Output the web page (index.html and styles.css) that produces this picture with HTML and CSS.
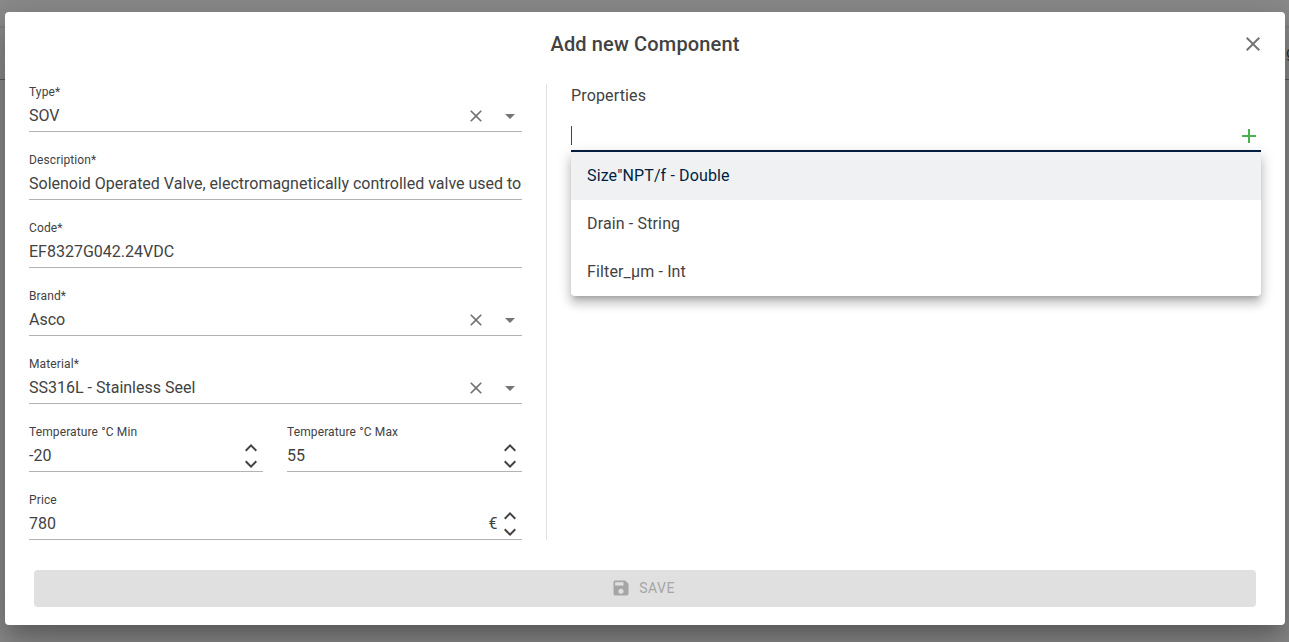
FILE: index.html
```html
<!DOCTYPE html>
<html lang="en">
<head>
<meta charset="utf-8">
<title>Add new Component</title>
<link rel="stylesheet" href="styles.css">
</head>
<body>
<svg class="sprite" aria-hidden="true">
  <symbol id="close" viewBox="0 0 24 24"><path d="M19 6.41L17.59 5L12 10.59L6.41 5L5 6.41L10.59 12L5 17.59L6.41 19L12 13.41L17.59 19L19 17.59L13.41 12z"/></symbol>
  <symbol id="drop" viewBox="0 0 24 24"><path d="M7 10l5 5 5-5z"/></symbol>
  <symbol id="plus" viewBox="0 0 24 24"><path d="M19 13h-6v6h-2v-6H5v-2h6V5h2v6h6z"/></symbol>
  <symbol id="up" viewBox="0 0 24 24"><path d="M7.41 15.41L12 10.83l4.59 4.58L18 14l-6-6-6 6z"/></symbol>
  <symbol id="down" viewBox="0 0 24 24"><path d="M7.41 8.58L12 13.17l4.59-4.59L18 10l-6 6-6-6z"/></symbol>
  <symbol id="save" viewBox="0 0 24 24"><path d="M15 9H5V5h10m-3 14a3 3 0 0 1-3-3 3 3 0 0 1 3-3 3 3 0 0 1 3 3 3 3 0 0 1-3 3m5-16H5a2 2 0 0 0-2 2v14a2 2 0 0 0 2 2h14a2 2 0 0 0 2-2V7z"/></symbol>
</svg>
<div class="backdrop"><div class="toolbar"><span>g</span></div></div>
<main class="dialog">
  <header class="header">
    <h1 class="title">Add new Component</h1>
    <svg class="icon close"><use href="#close"/></svg>
  </header>
  <div class="content">
    <form class="fields">
      <div class="field"><label class="label">Type*</label><div class="control"><span class="value">SOV</span><svg class="icon clear"><use href="#close"/></svg><svg class="icon"><use href="#drop"/></svg></div></div>
      <div class="field"><label class="label">Description*</label><div class="control"><span class="value">Solenoid Operated Valve, electromagnetically controlled valve used to</span></div></div>
      <div class="field"><label class="label">Code*</label><div class="control"><span class="value">EF8327G042.24VDC</span></div></div>
      <div class="field"><label class="label">Brand*</label><div class="control"><span class="value">Asco</span><svg class="icon clear"><use href="#close"/></svg><svg class="icon"><use href="#drop"/></svg></div></div>
      <div class="field"><label class="label">Material*</label><div class="control"><span class="value">SS316L - Stainless Seel</span><svg class="icon clear"><use href="#close"/></svg><svg class="icon"><use href="#drop"/></svg></div></div>
      <div class="pair">
        <div class="field"><label class="label">Temperature °C Min</label><div class="control"><span class="value">-20</span><span class="stepper"><svg><use href="#up"/></svg><svg><use href="#down"/></svg></span></div></div>
        <div class="field"><label class="label">Temperature °C Max</label><div class="control"><span class="value">55</span><span class="stepper"><svg><use href="#up"/></svg><svg><use href="#down"/></svg></span></div></div>
      </div>
      <div class="field"><label class="label">Price</label><div class="control"><span class="value">780</span><span class="unit">€</span><span class="stepper"><svg><use href="#up"/></svg><svg><use href="#down"/></svg></span></div></div>
    </form>
    <section class="properties">
      <h2 class="subtitle">Properties</h2>
      <div class="search"><span class="caret"></span><svg class="icon add"><use href="#plus"/></svg></div>
      <ul class="menu">
        <li class="option selected">Size"NPT/f - Double</li>
        <li class="option">Drain - String</li>
        <li class="option">Filter_µm - Int</li>
      </ul>
    </section>
  </div>
  <button class="save" disabled><svg><use href="#save"/></svg>SAVE</button>
</main>
</body>
</html>
```
FILE: styles.css
```css
* { box-sizing: border-box; }
body {
  margin: 0;
  height: 642px;
  padding: 12px 4px 17px 5px;
  overflow: hidden;
  background: #8b8b8b;
  color: #424242;
  font: 16px/24px Roboto, sans-serif;
}
.sprite { display: none; }
svg { display: block; flex: none; fill: currentColor; }
.backdrop { position: absolute; inset: 0; padding-top: 26px; }
.toolbar {
  height: 54px;
  padding-bottom: 2px;
  border-top: 2px solid #808080;
  border-bottom: 1px solid #5c5c5c;
  display: flex;
  justify-content: flex-end;
  align-items: center;
  color: #303030;
}
.toolbar span { margin-right: -6px; }
.dialog {
  position: relative;
  height: 613px;
  padding: 12px 24px 18px;
  border-radius: 4px;
  background: #fff;
  box-shadow: 0 11px 15px -7px rgba(0,0,0,.2), 0 24px 38px 3px rgba(0,0,0,.14), 0 9px 46px 8px rgba(0,0,0,.12);
}
.header {
  height: 40px;
  margin-bottom: 20px;
  display: grid;
  grid-template-columns: 1fr auto 1fr;
  align-items: center;
}
.title { grid-column: 2; margin: 0; font-size: 20px; font-weight: 500; letter-spacing: .15px; }
.icon { width: 24px; height: 24px; color: #757575; }
.close { justify-self: end; margin-right: -4px; }
.content { display: flex; height: 456px; }
.fields { display: flex; flex-direction: column; gap: 20px; width: 493px; margin-right: 24px; }
.field { min-width: 0; height: 48px; }
.label { display: block; font-size: 12px; line-height: 16px; letter-spacing: .12px; }
.control { display: flex; align-items: center; height: 32px; border-bottom: 1px solid #b3b3b3; }
.value { flex: 1; min-width: 0; overflow: hidden; white-space: nowrap; }
.clear { width: 20px; height: 20px; margin-right: 12px; }
.pair { display: grid; grid-template-columns: 234px 235px; gap: 24px; }
.stepper { display: grid; width: 24px; height: 32px; grid-template-rows: 16px 16px; justify-items: center; align-items: center; }
.stepper svg { width: 24px; height: 24px; margin: -4px 0; }
.unit { margin-right: .4px; }
.properties { flex: 1; border-left: 1px solid #e0e0e0; padding-left: 24px; position: relative; }
.subtitle { margin: 0 0 12px; font-size: 16px; font-weight: 400; letter-spacing: .15px; }
.search { display: flex; justify-content: space-between; align-items: center; height: 32px; border-bottom: 2px solid #001f43; }
.caret { width: 1px; height: 19px; background: #424242; }
.menu {
  position: absolute;
  top: 68px;
  left: 24px;
  right: 0;
  margin: 0;
  padding: 0;
  list-style: none;
  background: #fff;
  border-radius: 0 0 4px 4px;
  box-shadow: 0 5px 5px -3px rgba(0,0,0,.2), 0 8px 10px 1px rgba(0,0,0,.14), 0 3px 14px 2px rgba(0,0,0,.12);
}
.add { margin-top: 2px; color: #4caf50; }
.option { height: 48px; padding: 0 16px; line-height: 47px; letter-spacing: .14px; }
.selected { background: #eff1f3; color: #001f43; }
.save {
  display: flex;
  justify-content: center;
  align-items: center;
  gap: 8px;
  width: 1222px;
  height: 37px;
  margin: 30px 5px 0;
  padding: 0 4px 1px 0;
  border: 0;
  border-radius: 4px;
  background: #e0e0e0;
  color: #a6a6a6;
  font: 400 14px Roboto, sans-serif;
  letter-spacing: .5px;
}
.save svg { width: 20px; height: 20px; }
```
